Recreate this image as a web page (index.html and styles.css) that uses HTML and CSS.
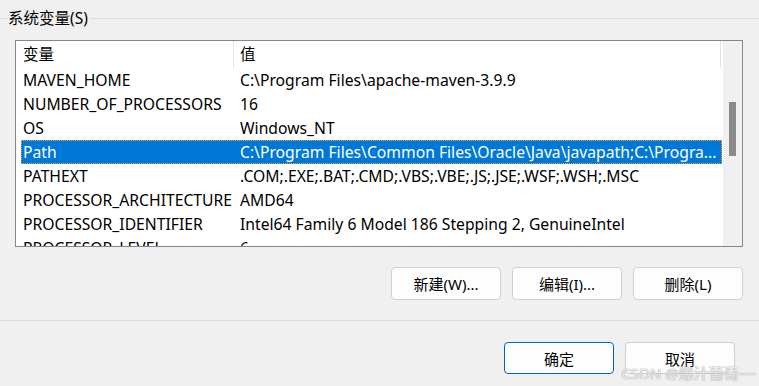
FILE: index.html
```html
<!DOCTYPE html>
<html lang="zh-CN">
<head>
    <meta charset="UTF-8">
    <meta name="viewport" content="width=device-width, initial-scale=1.0">
    <title>系统变量</title>
    <link rel="stylesheet" href="styles.css">
</head>
<body>
    <div class="dialog">
        <div class="group-head">
            <span class="group-title">系统变量(S)</span>
        </div>

        <div class="list">
            <div class="table">
                <div class="table-header">
                    <div class="head-cell head-name">变量</div>
                    <div class="head-cell head-value">值</div>
                </div>
                <div class="rows">
                    <div class="row"><div class="cell-name">MAVEN_HOME</div><div class="cell-value">C:\Program Files\apache-maven-3.9.9</div></div>
                    <div class="row"><div class="cell-name">NUMBER_OF_PROCESSORS</div><div class="cell-value">16</div></div>
                    <div class="row"><div class="cell-name">OS</div><div class="cell-value">Windows_NT</div></div>
                    <div class="row selected"><div class="cell-name">Path</div><div class="cell-value">C:\Program Files\Common Files\Oracle\Java\javapath;C:\Progra...</div></div>
                    <div class="row"><div class="cell-name">PATHEXT</div><div class="cell-value">.COM;.EXE;.BAT;.CMD;.VBS;.VBE;.JS;.JSE;.WSF;.WSH;.MSC</div></div>
                    <div class="row"><div class="cell-name">PROCESSOR_ARCHITECTURE</div><div class="cell-value">AMD64</div></div>
                    <div class="row"><div class="cell-name">PROCESSOR_IDENTIFIER</div><div class="cell-value">Intel64 Family 6 Model 186 Stepping 2, GenuineIntel</div></div>
                    <div class="row"><div class="cell-name">PROCESSOR_LEVEL</div><div class="cell-value">6</div></div>
                </div>
            </div>
            <div class="scrollbar">
                <div class="thumb"></div>
            </div>
        </div>

        <div class="actions">
            <button class="btn">新建(W)...</button>
            <button class="btn">编辑(I)...</button>
            <button class="btn">删除(L)</button>
        </div>

        <div class="separator"></div>

        <div class="footer">
            <button class="btn btn-default">确定</button>
            <button class="btn">取消</button>
        </div>

        <div class="watermark">CSDN @爆汁葡萄~~</div>
    </div>
</body>
</html>
```

FILE: styles.css
```css
body {
    margin: 0;
    background-color: #f0f0f0;
    font-family: "Noto Sans", "Noto Sans CJK SC", sans-serif;
    color: #000;
}
.dialog {
    position: relative;
    width: 759px;
    height: 386px;
    overflow: hidden;
}

/* titel van de groep, lijn loopt erachter door */
.group-head {
    display: flex;
    align-items: center;
    height: 36px;
}
.group-head::before {
    content: "";
    width: 8px;
    border-top: 1px solid #dcdcdc;
}
.group-head::after {
    content: "";
    flex: 1;
    border-top: 1px solid #dcdcdc;
}
.group-title {
    font-size: 15.5px;
    line-height: 20px;
    padding-right: 2px;
    margin-top: -1px;
}

.list {
    display: flex;
    margin: 4px 16px 0 15px;
    height: 205px;
    border: 1px solid #828790;
    background-color: #fff;
    overflow: hidden;
}
.table {
    width: 706px;
    flex: none;
}
.table-header {
    display: flex;
    height: 27px;
    align-items: stretch;
}
.head-cell {
    font-size: 15.5px;
    line-height: 26px;
    border-right: 1px solid #e5e5e5;
}
.head-name {
    width: 210px;
    padding-left: 7px;
}
.head-value {
    width: 480px;
    padding-left: 6px;
}
.rows {
    padding-left: 5px;
}
.row {
    display: flex;
    height: 24px;
    font-size: 15.7px;
    line-height: 24px;
    white-space: nowrap;
}
.cell-name {
    flex: none;
    width: 210px;
    padding-left: 2px;
}
.cell-value {
    padding-left: 7px;
    overflow: hidden;
}
.row.selected {
    background-color: #0078d7;
    color: #fff;
    outline: 1px dotted #ff9a2e;
    outline-offset: -1px;
}

.scrollbar {
    flex: 1;
    background-color: #f0f0f0;
    border-left: 1px solid #fff;
    display: flex;
    justify-content: center;
}
.thumb {
    width: 7px;
    height: 54px;
    margin-top: 61px;
    background-color: #8a8a8a;
}

.actions {
    display: flex;
    justify-content: flex-end;
    gap: 11px;
    padding: 20px 16px 0 0;
}
.btn {
    width: 110px;
    height: 33px;
    background-color: #fdfdfd;
    border: 1px solid #d0d0d0;
    border-radius: 4px;
    font-family: "Noto Sans", "Noto Sans CJK SC", sans-serif;
    font-size: 15px;
    color: #000;
    padding: 0;
}
.separator {
    margin-top: 20px;
    border-top: 1px solid #dadada;
}
.footer {
    display: flex;
    justify-content: flex-end;
    gap: 11px;
    padding: 21px 24px 0 0;
}
.footer .btn {
    height: 32px;
}
.btn-default {
    border-color: #0067c0;
}

.watermark {
    position: absolute;
    right: 3px;
    bottom: 3px;
    font-size: 15px;
    color: rgba(255, 255, 255, 0.8);
    text-shadow: 0 0 1px #a0a0a0, 0 0 1px #a0a0a0;
}
```
